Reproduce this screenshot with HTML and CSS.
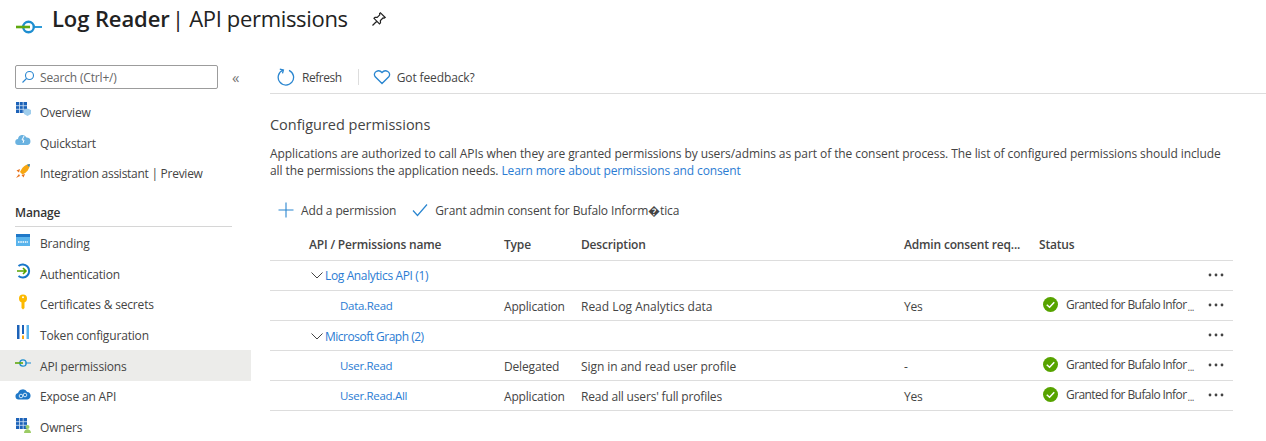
FILE: index.html
```html
<!DOCTYPE html>
<html lang="en">
<head>
<meta charset="utf-8">
<title>Log Reader | API permissions</title>
<link rel="stylesheet" href="styles.css">
</head>
<body>
<header class="page-header">
  <svg class="logo" viewBox="0 0 28 18" width="28" height="18"><path d="M18 9h8" stroke="#2f9bd8" stroke-width="2" fill="none"/><circle cx="12.500" cy="9" r="5.300" fill="none" stroke="#1e8ed0" stroke-width="2.400"/><path d="M0 9h14" stroke="#5ea80f" stroke-width="2.600" fill="none"/></svg>
  <h1 class="title"><b>Log Reader</b> | API permissions</h1>
  <svg class="pin" viewBox="0 0 16 16" width="16" height="16"><path d="M1.500 14.500 6 10M9.500 1.800l4.700 4.700-1 .7-1.200-.2-2.600 2.600.1 2.200-1 1L3 7.300l1-1 2.200.1L8.800 3.800l-.2-1.200z" fill="none" stroke="#222" stroke-width="1.200"/></svg>
</header>
<div class="layout">
  <nav class="sidebar">
    <div class="search-row">
      <div class="search">
        <svg viewBox="0 0 14 14" width="14" height="14"><circle cx="8.500" cy="5.500" r="4" fill="none" stroke="#2a86d0" stroke-width="1.100"/><path d="M5.500 8.500 1.500 12.500" stroke="#2a86d0" stroke-width="1.100"/></svg>
        <span>Search (Ctrl+/)</span>
      </div>
      <span class="collapse">«</span>
    </div>
    <ul class="menu">
      <li><svg viewBox="0 0 16 16" width="16" height="16"><path d="M1 1h11v11H1z" fill="#1c62b8"/><path d="M4.500 1v11M8.200 1v11M1 4.700h11M1 8.300h11" stroke="#d7e6f5" stroke-width=".8"/><path d="M9 9l3.500-1.500L16 9v4l-3.500 2L9 13z" fill="#9fcdec"/></svg>Overview</li>
      <li><svg viewBox="0 0 16 16" width="16" height="16"><path d="M3.500 13a3 3 0 0 1-.5-6 4.500 4.500 0 0 1 8.500-1.500A3.800 3.800 0 0 1 12.500 13z" fill="#6ab2e0"/><path d="M9 4 7 8h2l-1 3" stroke="#fff" stroke-width="1" fill="none"/></svg>Quickstart</li>
      <li><svg viewBox="0 0 16 16" width="16" height="16"><path d="M15 1c-5 .5-8 3.500-10 8l2.500 2.500C12 9.500 14.500 6 15 1z" fill="#f7a711"/><path d="M15 1l-3 .7 2.300 2.300z" fill="#2a86d0"/><path d="M5 6 1.500 7.500 4 9.500zM10 11l-1.500 3.500-2-2.500zM4 11l-3 4 4-2z" fill="#e8721b"/></svg><span class="tight">Integration assistant | Preview</span></li>
    </ul>
    <div class="section">Manage</div>
    <ul class="menu">
      <li><svg viewBox="0 0 16 16" width="16" height="16"><path d="M1 2h14v12H1z" fill="#5ab4ec"/><path d="M1 2h14v3H1z" fill="#1f78c8"/><path d="M3 10h10" stroke="#fff" stroke-width="1.500" stroke-dasharray="1.500 .8"/></svg>Branding</li>
      <li><svg viewBox="0 0 16 16" width="16" height="16"><path d="M3.500 3a6.500 6.500 0 1 1 0 10" fill="none" stroke="#1877c9" stroke-width="2"/><path d="M2 8h9M8 5l3 3-3 3" fill="none" stroke="#57a300" stroke-width="1.600"/></svg>Authentication</li>
      <li><svg viewBox="0 0 16 16" width="16" height="16"><circle cx="8" cy="4.500" r="4" fill="#fcb900"/><path d="M6.500 7h3v7L8 15.500 6.500 14z" fill="#fcb900"/><circle cx="8" cy="3.300" r="1" fill="#fff"/></svg>Certificates &amp; secrets</li>
      <li><svg viewBox="0 0 16 16" width="16" height="16"><path d="M2 1h2.500v14H2z" fill="#1c62b8"/><path d="M7 1h2v9H7z" fill="#1c62b8"/><path d="M7 11.500h2V15H7z" fill="#f7a711"/><path d="M11.500 1H14v14h-2.500z" fill="#5ab4ec"/></svg>Token configuration</li>
      <li class="active"><svg viewBox="0 0 16 16" width="16" height="16"><path d="M10 8h6" stroke="#3d9bd6" stroke-width="1.200"/><circle cx="8" cy="8" r="3.200" fill="none" stroke="#1e8ed0" stroke-width="1.300"/><path d="M0 8h8" stroke="#5ea80f" stroke-width="1.600"/></svg>API permissions</li>
      <li><svg viewBox="0 0 16 16" width="16" height="16"><path d="M3.500 13.500a3.300 3.300 0 0 1-.5-6.500 5 5 0 0 1 9.200-1A3.800 3.800 0 0 1 12.500 13.500z" fill="#1f78c8"/><circle cx="6" cy="10" r="1.800" fill="none" stroke="#cfe6f7"/><circle cx="10" cy="9" r="1.800" fill="none" stroke="#cfe6f7"/></svg>Expose an API</li>
      <li><svg viewBox="0 0 16 16" width="16" height="16"><path d="M1 1h11v11H1z" fill="#1c62b8"/><path d="M4.500 1v11M8.200 1v11M1 4.700h11M1 8.300h11" stroke="#d7e6f5" stroke-width=".8"/><circle cx="12.500" cy="10" r="2" fill="#9ccc65"/><path d="M9 16c0-5 7-5 7 0z" fill="#9ccc65"/></svg>Owners</li>
    </ul>
  </nav>
  <main class="content">
    <div class="toolbar">
      <button class="tool narrow"><svg viewBox="0 0 18 18" width="18" height="18"><path d="M6 2.200A7.700 7.700 0 1 0 12 2.300" fill="none" stroke="#2a86d0" stroke-width="1.300"/><path d="M2.800 1.200 6.400 2 5.500 5.400" fill="none" stroke="#2a86d0" stroke-width="1.300"/></svg>Refresh</button>
      <span class="divider"></span>
      <button class="tool feedback"><svg viewBox="0 0 18 16" width="18" height="16"><path d="M9 14.500 2 7.500C-.5 3.500 5.500-.5 9 3.500c3.500-4 9.500 0 7 4z" fill="none" stroke="#2a86d0" stroke-width="1.300"/></svg>Got feedback?</button>
    </div>
    <h2 class="heading">Configured permissions</h2>
    <p class="intro">Applications are authorized to call APIs when they are granted permissions by users/admins as part of the consent process. The list of configured permissions should include all the permissions the application needs. <a href="#">Learn more about permissions and consent</a></p>
    <div class="actions">
      <button class="tool"><svg viewBox="0 0 16 16" width="16" height="16"><path d="M8 .5v15M.5 8h15" stroke="#2a86d0" stroke-width="1.100"/></svg>Add a permission</button>
      <button class="tool"><svg viewBox="0 0 16 14" width="16" height="14"><path d="M1 7.500 5.500 12.500 15 1.500" fill="none" stroke="#2a86d0" stroke-width="1.200"/></svg>Grant admin consent for Bufalo Inform�tica</button>
    </div>
    <div class="table">
      <div class="row head"><span class="c-name">API / Permissions name</span><span class="c-type">Type</span><span class="c-desc">Description</span><span class="c-admin">Admin consent req...</span><span class="c-status">Status</span></div>
      <div class="row"><a class="c-group" href="#"><svg viewBox="0 0 12 7" width="12" height="7"><path d="M.5.500 6 6l5.500-5.500" fill="none" stroke="#444" stroke-width="1"/></svg>Log Analytics API (1)</a><svg class="more" viewBox="0 0 16 4" width="16" height="4"><circle cx="2" cy="2" r="1.400"/><circle cx="8" cy="2" r="1.400"/><circle cx="14" cy="2" r="1.400"/></svg></div>
      <div class="row"><a class="c-name perm" href="#">Data.Read</a><span class="c-type">Application</span><span class="c-desc d-wide">Read Log Analytics data</span><span class="c-admin">Yes</span><span class="c-status grant"><svg viewBox="0 0 16 16" width="15" height="15"><circle cx="8" cy="8" r="8" fill="#57a300"/><path d="M4 8.300 7 11l5-5.500" fill="none" stroke="#fff" stroke-width="1.600"/></svg><span class="clip">Granted for Bufalo Infor</span><i>...</i></span><svg class="more" viewBox="0 0 16 4" width="16" height="4"><circle cx="2" cy="2" r="1.400"/><circle cx="8" cy="2" r="1.400"/><circle cx="14" cy="2" r="1.400"/></svg></div>
      <div class="row"><a class="c-group c-tight" href="#"><svg viewBox="0 0 12 7" width="12" height="7"><path d="M.5.500 6 6l5.500-5.500" fill="none" stroke="#444" stroke-width="1"/></svg>Microsoft Graph (2)</a><svg class="more" viewBox="0 0 16 4" width="16" height="4"><circle cx="2" cy="2" r="1.400"/><circle cx="8" cy="2" r="1.400"/><circle cx="14" cy="2" r="1.400"/></svg></div>
      <div class="row"><a class="c-name perm" href="#">User.Read</a><span class="c-type">Delegated</span><span class="c-desc d-mid">Sign in and read user profile</span><span class="c-admin">-</span><span class="c-status grant"><svg viewBox="0 0 16 16" width="15" height="15"><circle cx="8" cy="8" r="8" fill="#57a300"/><path d="M4 8.300 7 11l5-5.500" fill="none" stroke="#fff" stroke-width="1.600"/></svg><span class="clip">Granted for Bufalo Infor</span><i>...</i></span><svg class="more" viewBox="0 0 16 4" width="16" height="4"><circle cx="2" cy="2" r="1.400"/><circle cx="8" cy="2" r="1.400"/><circle cx="14" cy="2" r="1.400"/></svg></div>
      <div class="row"><a class="c-name perm" href="#">User.Read.All</a><span class="c-type">Application</span><span class="c-desc">Read all users' full profiles</span><span class="c-admin">Yes</span><span class="c-status grant"><svg viewBox="0 0 16 16" width="15" height="15"><circle cx="8" cy="8" r="8" fill="#57a300"/><path d="M4 8.300 7 11l5-5.500" fill="none" stroke="#fff" stroke-width="1.600"/></svg><span class="clip">Granted for Bufalo Infor</span><i>...</i></span><svg class="more" viewBox="0 0 16 4" width="16" height="4"><circle cx="2" cy="2" r="1.400"/><circle cx="8" cy="2" r="1.400"/><circle cx="14" cy="2" r="1.400"/></svg></div>
    </div>
  </main>
</div>
</body>
</html>
```

FILE: styles.css
```css
* { box-sizing: border-box; }
html, body { margin: 0; height: 441px; overflow: hidden; background: #fff; }
body { font-family: "Open Sans", "Noto Sans", sans-serif; font-size: 12px; letter-spacing: -.17px; color: #444; }
a { color: #2b7cd3; text-decoration: none; }
ul { list-style: none; margin: 0; padding: 0; }
.page-header { display: flex; align-items: center; height: 53px; padding: 0 0 18px 16px; }
.logo { margin-top: 18px; margin-right: 8px; }
.title { margin: 0; font-size: 22px; font-weight: 400; letter-spacing: -.33px; color: #222; line-height: 40px; }
.title b { font-weight: 600; letter-spacing: -.1px; margin-right: -3px; }
.pin { margin-left: 23px; margin-top: 2px; }
.layout { display: flex; }
.sidebar { width: 251px; flex: none; }
.search-row { display: flex; align-items: center; padding: 12px 0 0 15px; height: 36px; }
.search { width: 203px; height: 24px; border: 1px solid #9c9c9c; border-radius: 2px; display: flex; align-items: center; gap: 5px; padding-left: 5px; color: #666; }
.collapse { margin-left: 14px; font-size: 15px; color: #777; line-height: 20px; }
.menu li { display: flex; align-items: center; gap: 9px; height: 30.7px; padding: 2px 0 0 15px; }
.menu li svg { flex: none; margin-top: -6px; }
.menu:first-of-type { margin-top: 7px; }
.menu li.active { background: #ececea; }
.tight { letter-spacing: -.27px; }
.section { margin: 8px 19px 0 15px; height: 31px; padding-top: 8px; font-weight: 600; color: #333; border-bottom: 1px solid #d6d6d6; }
.content { flex: 1; padding-left: 19px; min-width: 0; }
.toolbar { display: flex; align-items: center; height: 41px; padding: 8px 0 0 7px; border-bottom: 1px solid #ddd; }
.tool { display: flex; align-items: center; gap: 7px; border: 0; background: none; padding: 0; font: inherit; letter-spacing: -.13px; color: #444; }
.narrow { letter-spacing: -.45px; }
.feedback { gap: 6px; }
.divider { width: 1px; height: 16px; background: #ddd; margin: 0 14px 0 16px; }
.heading { margin: 21px 0 0; font-size: 14.500px; font-weight: 400; letter-spacing: -.02px; color: #444; line-height: 20px; }
.intro { margin: 11px 33px 0 0; line-height: 16.500px; letter-spacing: -.08px; }
.intro a { letter-spacing: -.12px; }
.actions { display: flex; align-items: center; gap: 16px; height: 20px; margin-top: 21px; padding-left: 8px; }
.table { margin: 9px 33px 0 0; }
.row { position: relative; display: flex; align-items: center; height: 30px; border-bottom: 1px solid #ddd; }
.head { font-weight: 600; color: #444; height: 32px; padding-bottom: 1px; }
.c-name { width: 234px; padding-left: 39px; flex: none; }
.perm { padding-left: 70px; font-size: 11.500px; letter-spacing: -.3px; }
.c-type { width: 77px; flex: none; }
.c-desc { width: 323px; flex: none; }
.c-admin { width: 135px; flex: none; }
.c-status { flex: none; }
.row:not(.head) .c-type, .row:not(.head) .c-desc, .row:not(.head) .c-admin { margin-top: 2px; }
.d-wide { letter-spacing: -.02px; }
.d-mid { letter-spacing: -.08px; }
.c-group { display: flex; align-items: center; gap: 2px; padding-left: 41px; letter-spacing: -.37px; }
.c-tight { letter-spacing: -.5px; margin-top: 2px; }
.grant { display: flex; align-items: center; gap: 8px; padding-left: 4px; margin-top: -2px; }
.clip { white-space: nowrap; letter-spacing: -.58px; }
.grant i { font-style: normal; font-size: 10px; margin: 5px 0 0 -7px; letter-spacing: -.5px; color: #555; }
.more { position: absolute; right: 9px; top: 12px; fill: #444; }
```
